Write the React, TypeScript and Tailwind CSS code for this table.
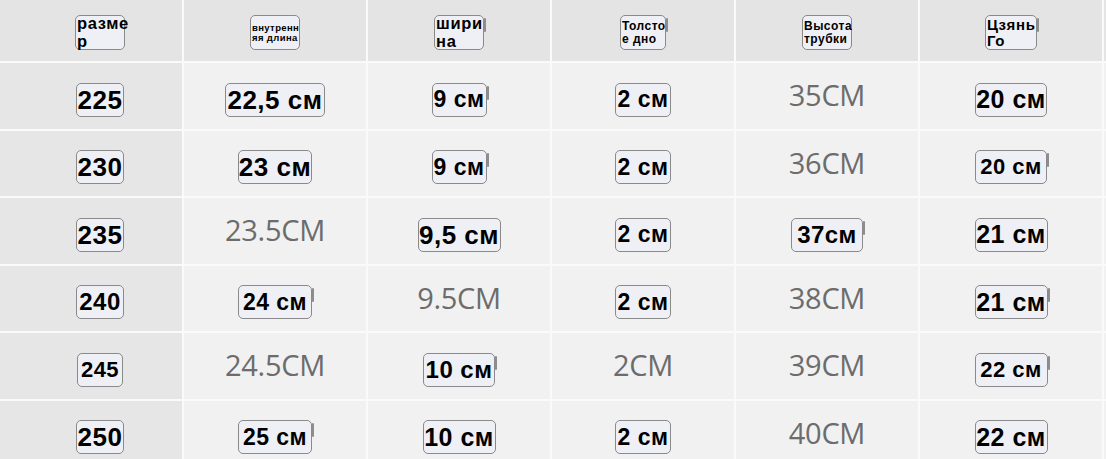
type Cell =
  | { kind: "box"; text: string; w: number; fs: number; mark?: boolean }
  | { kind: "gray"; text: string };

const head: { lines: string[]; w: number; fs: number; mark?: boolean }[] = [
  { lines: ["разме", "р"], w: 50, fs: 16.5 },
  { lines: ["внутренн", "яя длина"], w: 50, fs: 9.5 },
  { lines: ["шири", "на"], w: 50, fs: 16.5, mark: true },
  { lines: ["Толсто", "е дно"], w: 46, fs: 12, mark: true },
  { lines: ["Высота", "трубки"], w: 50, fs: 12 },
  { lines: ["Цзянь", "Го"], w: 52, fs: 15, mark: true },
];

const b = (text: string, w: number, fs: number, mark = false): Cell => ({ kind: "box", text, w, fs, mark });
const g = (text: string): Cell => ({ kind: "gray", text });

const rows: Cell[][] = [
  [b("225", 48, 26), b("22,5 см", 100, 26), b("9 см", 55, 23, true), b("2 см", 56, 23), g("35CM"), b("20 см", 72, 25)],
  [b("230", 48, 26), b("23 см", 74, 26), b("9 см", 55, 23, true), b("2 см", 56, 23), g("36CM"), b("20 см", 72, 22, true)],
  [b("235", 48, 26), g("23.5CM"), b("9,5 см", 83, 26), b("2 см", 56, 23), b("37см", 72, 24, true), b("21 см", 73, 25)],
  [b("240", 48, 24), b("24 см", 74, 23, true), g("9.5CM"), b("2 см", 56, 23), g("38CM"), b("21 см", 73, 25, true)],
  [b("245", 46, 22), g("24.5CM"), b("10 см", 72, 24, true), g("2CM"), g("39CM"), b("22 см", 73, 22, true)],
  [b("250", 48, 26), b("25 см", 74, 23, true), b("10 см", 73, 25), b("2 см", 56, 23), g("40CM"), b("22 см", 73, 25)],
];

const boxCls =
  "relative bg-[#eef0f6] border border-[#8a8a8a] rounded-[5px] text-black font-bold whitespace-nowrap";

function Mark() {
  return <span className="absolute right-[-3px] top-[2px] w-[2px] h-[14px] bg-[#8d8d8d] rounded-[1px]" />;
}

function BodyCell({ cell, first }: { cell: Cell; first: boolean }) {
  const bg = first ? "bg-[#e6e6e6]" : "bg-[#f1f1f1]";
  return (
    <div className={`${bg} h-[65.5px] flex items-center justify-center ${first ? "pl-[18px]" : ""}`}>
      {cell.kind === "box" ? (
        <div
          className={`${boxCls} h-[34px] mt-[8px] flex items-center justify-center tracking-[0.02em] leading-none`}
          style={{ width: cell.w, fontSize: cell.fs }}
        >
          {cell.text}
          {cell.mark && <Mark />}
        </div>
      ) : (
        <div className="mb-[2px] text-[29px] text-[#6c6c6c] font-['Open_Sans',sans-serif] leading-none tracking-[-0.01em]">
          {cell.text}
        </div>
      )}
    </div>
  );
}

export default function App() {
  return (
    <div className="w-[1106px] h-[459px] overflow-hidden bg-[#fafafa] font-['Liberation_Sans',Arial,sans-serif]">
      <div className="grid grid-cols-[182px_182px_182px_182px_182px_182px_1fr] gap-[2px]">
        {head.map((h, i) => (
          <div
            key={i}
            className={`bg-[#e4e4e4] h-[61px] flex items-center justify-center ${i === 0 ? "pl-[18px]" : ""}`}
          >
            <div
              className={`${boxCls} h-[35px] mt-[4px] flex flex-col justify-center items-start px-[1px] leading-[1.05] tracking-[0.04em]`}
              style={{ width: h.w, fontSize: h.fs }}
            >
              {h.lines.map((l) => (
                <span key={l}>{l}</span>
              ))}
              {h.mark && <Mark />}
            </div>
          </div>
        ))}
        <div className="bg-[#e4e4e4] h-[61px]" />
        {rows.map((r, ri) => [
          ...r.map((c, ci) => <BodyCell key={`${ri}-${ci}`} cell={c} first={ci === 0} />),
          <div key={`${ri}-end`} className="bg-[#f1f1f1] h-[65.5px]" />,
        ])}
      </div>
    </div>
  );
}
